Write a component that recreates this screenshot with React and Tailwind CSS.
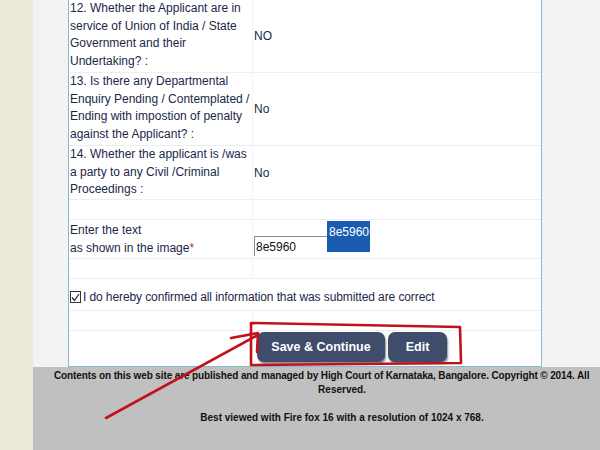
const Row = ({ h, children, className = "" }) => (
  <div className={`flex border-b border-[#eeeeee] ${h} ${className}`}>{children}</div>
);

const Label = ({ children }) => (
  <div className="w-[184px] pl-[1px] border-r border-[#f3f3f3] leading-[17.5px]">{children}</div>
);

const App = () => {
  return (
    <div className="relative w-[600px] h-[450px] flex overflow-hidden font-['Liberation_Sans',sans-serif] text-[12px] text-[#1b2749]">
      <div className="w-[33px] shrink-0 bg-[#ebead8]" />

      <div className="flex-1 flex flex-col bg-[#f3f3f3]">
        <div className="pl-[35px]">
          <div className="w-[474px] bg-white border-x border-b border-[#84bacb]">
            {/* Q12 */}
            <Row h="h-[73px]">
              <Label>
                12. Whether the Applicant are in<br />
                service of Union of India / State<br />
                Government and their<br />
                Undertaking? :
              </Label>
              <div className="flex items-center pl-[1px]">NO</div>
            </Row>

            {/* Q13 */}
            <Row h="h-[73px]">
              <Label>
                13. Is there any Departmental<br />
                Enquiry Pending / Contemplated /<br />
                Ending with impostion of penalty<br />
                against the Applicant? :
              </Label>
              <div className="flex items-center pl-[1px]">No</div>
            </Row>

            {/* Q14 */}
            <Row h="h-[54px]">
              <Label>
                14. Whether the applicant is /was<br />
                a party to any Civil /Criminal<br />
                Proceedings :
              </Label>
              <div className="flex items-center pl-[1px]">No</div>
            </Row>

            <Row h="h-[20px]">
              <Label />
            </Row>

            {/* Captcha */}
            <Row h="h-[39px]">
              <div className="w-[184px] pl-[1px] border-r border-[#f3f3f3] leading-[18px] flex flex-col justify-center">
                <span>Enter the text</span>
                <span>
                  as shown in the image<span className="text-[#d0202a]">*</span>
                </span>
              </div>
              <div className="flex items-start pl-[1px]">
                <div className="mt-[16px] w-[73px] h-[20px] border-t border-l border-[#8a8a8a] pl-[1px] leading-[20px] text-[#111]">
                  8e5960
                </div>
                <div className="mt-[1px] w-[43px] h-[31px] bg-[#1b5cb3] text-white text-[12px] leading-[22px] pl-[2px]">
                  8e5960
                </div>
              </div>
            </Row>

            <Row h="h-[20px]">
              <Label />
            </Row>

            {/* Declaration */}
            <Row h="h-[32px]" className="items-center pt-[5px]">
              <div className="flex items-center gap-[2px] pl-[1px]">
                <span className="w-[11px] h-[12px] border border-[#333] flex items-center justify-center">
                  <svg width="9" height="9" viewBox="0 0 9 9">
                    <path d="M1 4.5 L3.5 7.5 L8 1" fill="none" stroke="#222" strokeWidth="1.2" />
                  </svg>
                </span>
                <span className="tracking-[-0.1px]">
                  I do hereby confirmed all information that was submitted are correct
                </span>
              </div>
            </Row>

            <Row h="h-[20px]">
              <Label />
            </Row>

            {/* Buttons */}
            <div className="flex h-[35px]">
              <div className="w-[184px] border-r border-[#f3f3f3]" />
              <div className="flex items-start gap-[3px] pl-[4px] pt-[1px]">
                <button className="w-[128px] h-[30px] rounded-[7px] bg-[#3f4c6c] text-white font-bold text-[12.5px] shadow-[1px_2px_2px_rgba(0,0,0,0.45)]">
                  Save &amp; Continue
                </button>
                <button className="w-[59px] h-[30px] rounded-[7px] bg-[#3f4c6c] text-white font-bold text-[12.5px] shadow-[1px_2px_2px_rgba(0,0,0,0.45)]">
                  Edit
                </button>
              </div>
            </div>
          </div>
        </div>

        {/* Footer */}
        <footer className="flex-1 bg-[#c0c0c0] pt-[2px] text-[10px] font-bold text-[#111] leading-[14px]">
          <div className="pl-[21px] whitespace-nowrap tracking-[-0.12px]">
            Contents on this web site are published and managed by High Court of Karnataka, Bangalore. Copyright © 2014. All
          </div>
          <div className="ml-[21px] w-[576px] text-center">Reserved.</div>
          <div className="ml-[21px] w-[576px] text-center mt-[14px]">
            Best viewed with Fire fox 16 with a resolution of 1024 x 768.
          </div>
        </footer>
      </div>

      {/* red annotation */}
      <svg className="absolute left-0 top-0 pointer-events-none" width="600" height="450" viewBox="0 0 600 450">
        <g fill="none" stroke="#c1121c" strokeWidth="2.6" strokeLinecap="round" strokeLinejoin="round">
          <path d="M251 323 L460 327 L461 363 L251 365 Z" />
          <path d="M106 418 L258 335" />
          <path d="M231 338 L258 333 L257 352" />
        </g>
      </svg>
    </div>
  );
};

export default App;
